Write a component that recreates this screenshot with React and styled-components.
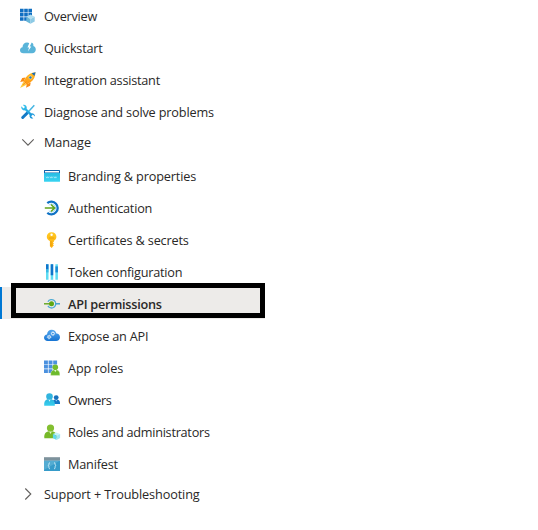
import React from "react";
import styled, { createGlobalStyle } from "styled-components";

const GlobalStyle = createGlobalStyle`
  body {
    margin: 0;
    background: #fff;
    overflow: hidden;
  }
`;

const Nav = styled.nav`
  width: 265px;
  font-family: "Open Sans", "Noto Sans", sans-serif;
  font-size: 12.7px;
  color: #292827;
`;

const List = styled.ul`
  list-style: none;
  margin: 0;
  padding: 0;
`;

const Item = styled.li`
  position: relative;
  display: flex;
  align-items: center;
  gap: 8px;
  height: 32px;
  padding-left: ${(p) => (p.$nested ? 44 : 20)}px;
`;

const ActiveItem = styled(Item)`
  box-sizing: border-box;
  margin-top: -1px;
  margin-bottom: 1px;
  padding-left: 42px;
  padding-top: 2px;
  border-left: 2px solid #0078d4;
  background: #edebe9;
  font-weight: 600;
`;

const Frame = styled.span`
  position: absolute;
  box-sizing: border-box;
  left: 9px;
  top: -4px;
  width: 254px;
  height: 35px;
  border: 5px solid #000;
`;

const GroupHeader = styled.div`
  display: flex;
  align-items: center;
  gap: 8px;
  height: 28px;
  padding-left: 20px;
  margin-bottom: 4px;
`;

const Icon = styled.svg`
  flex: none;
  width: 16px;
  height: 16px;
  overflow: visible;
`;

const Label = styled.span`
  line-height: 18px;
  white-space: nowrap;
  letter-spacing: ${(p) => p.$track || 0}px;
`;

const Gradient = ({ id, from, to }) => (
  <linearGradient id={id} x1="0" y1="0" x2="0" y2="1">
    <stop offset="0" stopColor={from} />
    <stop offset="1" stopColor={to} />
  </linearGradient>
);

const OverviewIcon = () => (
  <Icon viewBox="0 0 16 16">
    <path fill="#0f6fc2" d="M0 .8h3.600v3.600H0zM4.200.8h3.600v3.600H4.200zM8.400.8H12v3.600H8.400zM0 5h3.600v3.600H0zM4.200 5h3.600v3.600H4.200zM8.400 5H12v3.600H8.400zM0 9.200h3.600v3.600H0zM4.200 9.200h3.600v3.600H4.200z" />
    <path fill="#b3def0" d="m10.500 6.500 4.200 2.200-4.200 2.300-4.200-2.300z" />
    <path fill="#69b6d8" d="m6.300 8.700 4.200 2.300v4.800l-4.200-2.300z" />
    <path fill="#8dcae5" d="m14.700 8.700-4.200 2.300v4.800l4.200-2.300z" />
  </Icon>
);

const QuickstartIcon = () => (
  <Icon viewBox="0 0 16 16">
    <path fill="#59b4d9" d="M3.400 13.200C1.300 13.200 0 11.900 0 10.200c0-1.700 1.200-2.700 2.500-2.900C2.600 4.500 4.500 2.500 7 2.500c1 0 1.900.3 2.600.9.700-.7 1.600-.9 2.400-.6 1.100.4 1.600 1.600 1.400 3.200 1.400.5 2.400 1.800 2.400 3.500 0 2.300-1.600 3.700-3.600 3.700z" />
    <path fill="#fff" d="M9.500 2.500 7.500 7.500h1.600l-1.200 4L11.300 6.600H9.700l2-4.100z" />
  </Icon>
);

const RocketIcon = () => (
  <Icon viewBox="0 0 16 16">
    <defs>
      <Gradient id="rocket" from="#ffbd22" to="#ff9616" />
    </defs>
    <path fill="#f98b16" d="M5.400 5.400 2.200 6 .2 10.100l3.600-.8zM10.700 10.500 10.100 13.700 6 15.800l.8-3.600z" />
    <path fill="url(#rocket)" d="M15.500.3C11.300.5 8.300 2.200 6 5.200L3.300 9.500l3.300 3.300 4.200-2.700c3-2.300 4.600-5.300 4.700-9.800z" />
    <path fill="#ffca3a" d="M3.400 9.700.1 15.900l6.300-3.200z" />
    <path fill="#156bbb" d="M15.600.2 11.700 1.300l2.700 2.700z" />
    <circle cx="10.400" cy="5.500" r="1.600" fill="#1b7ac9" stroke="#ffe28a" strokeWidth=".7" />
    <path d="m3 12.900 3.300-3.300" stroke="#f28213" strokeWidth=".8" />
  </Icon>
);

const ToolsIcon = () => (
  <Icon viewBox="0 0 16 16">
    <defs>
      <linearGradient id="wrench" x1="2" y1="2" x2="14" y2="15" gradientUnits="userSpaceOnUse">
        <stop offset="0" stopColor="#36c4ed" />
        <stop offset="1" stopColor="#168bd5" />
      </linearGradient>
    </defs>
    <path d="m14.300 1.200-7.300 8" stroke="#45b5e2" strokeWidth="1.500" />
    <path d="m7 9.200-4.300 4.300" stroke="#147ac7" strokeWidth="3" strokeLinecap="round" />
    <path fill="url(#wrench)" d="M1.300 2.300 3.500 4.500l1.500-1.400L2.900.9C5 .3 7.300 2 6.700 4.700l4.500 4.600c1.900-.5 4 .9 3.700 3.300l-2-2-1.800 1.700 2.200 2.200c-2.200.6-4.300-1.100-3.700-3.600L5 6.300C2.700 7 .7 4.700 1.300 2.300z" />
  </Icon>
);

const ChevronDown = () => (
  <Icon viewBox="0 0 16 16">
    <path d="m2.300 5.400 5.700 5.700 5.700-5.700" fill="none" stroke="#605e5c" strokeWidth="1.100" />
  </Icon>
);

const ChevronRight = () => (
  <Icon viewBox="0 0 16 16">
    <path d="m5.300 2.500 5.500 5.500-5.500 5.500" fill="none" stroke="#605e5c" strokeWidth="1.100" />
  </Icon>
);

const BrandingIcon = () => (
  <Icon viewBox="0 0 16 16">
    <defs>
      <Gradient id="browser" from="#29bce3" to="#39d4f1" />
    </defs>
    <path fill="url(#browser)" d="M0 5h16v8.200a.6.600 0 0 1-.6.600H.6a.6.600 0 0 1-.6-.6z" />
    <path fill="#0d61a9" d="M.6 2h14.800a.6.600 0 0 1 .6.600V5H0V2.600A.6.600 0 0 1 .6 2z" />
    <path fill="#fff" d="M1 3h14v1.500H1z" />
    <path d="m2 8.700.7 1.400.7-1.400.7 1.400.7-1.400m1.100 0 .7 1.400.7-1.400.7 1.400.7-1.400m1.100 0 .7 1.400.7-1.400.7 1.400.7-1.400" fill="none" stroke="#c4f2fb" strokeWidth=".6" />
  </Icon>
);

const AuthenticationIcon = () => (
  <Icon viewBox="0 0 16 16">
    <path d="M3.300 3.200A6.300 6.300 0 1 1 3.300 12.800" fill="none" stroke="#0f72c5" strokeWidth="2.300" />
    <path d="M4.800 5.100a4 4 0 1 1 0 5.800" fill="none" stroke="#75c8ed" strokeWidth=".7" />
    <path d="M.8 8h9.500M7 4.500 10.600 8 7 11.500" fill="none" stroke="#62a51c" strokeWidth="1.600" />
  </Icon>
);

const KeyIcon = () => (
  <Icon viewBox="0 0 16 16">
    <defs>
      <Gradient id="key" from="#ffca24" to="#ffad0c" />
    </defs>
    <path fill="url(#key)" fillRule="evenodd" d="M7.600.2c2.900 0 4.800 1.800 4.800 4.500 0 1.900-1 3.300-2.500 4v1.100l-1 .8 1 .9-1 .9 1 .9-.9 1L7.700 16l-1.800-1.800V8.900C4.100 8.100 2.800 6.700 2.800 4.700 2.800 2 4.700.2 7.600.2zm0 1.400a1.200 1.200 0 1 0 0 2.400 1.200 1.200 0 0 0 0-2.400z" />
    <path d="M7 9v5.200M5 6h5.200" stroke="#df9509" strokeWidth=".7" />
  </Icon>
);

const TokenIcon = () => (
  <Icon viewBox="0 0 16 16">
    <path fill="#5ddcf2" d="M2 .2h2.500v15.500H2zM6.700.2h2.500v15.500H6.700zM11.400.2h2.500v15.500h-2.500z" />
    <path fill="#0f74cb" d="M2 .2h2.500v5.200H2zM6.700.2h2.500v11H6.700z" />
    <path fill="#198bd6" d="M11.400 2.400h2.500v6h-2.500z" />
    <path fill="#38b8e4" d="M2 5.400h2.500v3H2z" />
  </Icon>
);

const PermissionsIcon = () => (
  <Icon viewBox="0 0 16 16">
    <path d="M3.900 5.700a4.200 4.200 0 1 1 0 4.200" fill="none" stroke="#51abd3" strokeWidth="1.300" />
    <path d="M11.600 7.800H16" stroke="#3c9ccc" strokeWidth="1.400" />
    <path d="M0 7.800h6" stroke="#61a51d" strokeWidth="1.400" />
    <circle cx="7.500" cy="7.800" r="2.500" fill="#5fa714" />
  </Icon>
);

const ExposeIcon = () => (
  <Icon viewBox="0 0 16 16">
    <defs>
      <Gradient id="cloud" from="#55a7ed" to="#1674d3" />
    </defs>
    <path fill="url(#cloud)" d="M3.700 13C1.500 13 0 11.600 0 9.700c0-1.700 1.300-3 3-3.200C3.200 3.700 5.100 1.700 7.700 1.700c2.400 0 4.200 1.500 4.700 3.800 2.100.1 3.600 1.600 3.600 3.700 0 2.200-1.700 3.800-3.900 3.800z" />
    <circle cx="8.900" cy="5.600" r="1.400" fill="none" stroke="#fff" strokeWidth=".9" />
    <circle cx="8.900" cy="5.600" r="2.100" fill="none" stroke="#e7f5ff" strokeWidth=".5" strokeDasharray=".8 .93" />
    <circle cx="5.100" cy="9" r="1.300" fill="none" stroke="#fff" strokeWidth=".9" />
    <circle cx="5.100" cy="9" r="2" fill="none" stroke="#e7f5ff" strokeWidth=".5" strokeDasharray=".8 .85" />
  </Icon>
);

const AppRolesIcon = () => (
  <Icon viewBox="0 0 16 16">
    <path fill="#4b91df" d="M0 .4h3.900v3.800H0zM4.600.4h3.900v3.800H4.600zM9.200.4h3.900v3.800H9.200zM0 4.800h3.900v3.800H0zM4.600 4.800h3.900v3.800H4.600zM9.200 4.800h3.900v3.800H9.200zM0 9.200h3.900V13H0zM4.600 9.200h3.900V13H4.600z" />
    <path fill="#6dba2c" stroke="#fff" strokeWidth=".3" d="M6.700 15.400v-1.600c0-2.400 1.700-4 4.600-4s4.500 1.600 4.500 4v1.600z" />
    <path fill="#e9f8d6" d="m10.200 10 1.100 2.200 1-2.200z" />
    <circle cx="11.300" cy="7.200" r="2.800" fill="#76bd2d" />
  </Icon>
);

const OwnersIcon = () => (
  <Icon viewBox="0 0 16 16">
    <defs>
      <Gradient id="ownerFront" from="#2fb5dc" to="#35ceef" />
    </defs>
    <path fill="#1677c6" d="M8.400 12v-1.300c0-2.100 1.200-3.300 3.700-3.300 2.600 0 3.900 1.200 3.900 3.300V12z" />
    <path fill="#dff4ff" d="m11.400 7.500.8 1.900.8-1.900z" />
    <circle cx="12.200" cy="5.600" r="2.400" fill="#1770bc" />
    <path fill="url(#ownerFront)" d="M.2 13.700v-1.900C.2 8.700 2.200 7 5.500 7s5.300 1.700 5.300 4.800v1.900z" />
    <path fill="#d9f7fc" d="m4.200 7.100 1.300 2.600 1.300-2.600z" />
    <circle cx="5.500" cy="4.500" r="3.300" fill="#31b4de" />
  </Icon>
);

const RolesIcon = () => (
  <Icon viewBox="0 0 16 16">
    <path fill="#77b929" d="M.3 14.300v-2C.3 9 2.500 7.200 6.500 7.200s6.300 1.800 6.300 5.100v2z" />
    <path fill="#e1f4c6" d="m5 7.300 1.500 2.700 1.500-2.700z" />
    <circle cx="6.500" cy="4" r="3.600" fill="#83bf30" />
    <path fill="#c4f3fb" d="m12.500 8.400 3.600 1.600-3.600 1.800L8.900 10z" />
    <path fill="#62d9ed" d="m8.900 10 3.600 1.800V16l-3.600-1.900z" />
    <path fill="#a1e5f2" d="m16.100 10-3.600 1.800V16l3.600-1.900z" />
  </Icon>
);

const ManifestIcon = () => (
  <Icon viewBox="0 0 16 16">
    <path fill="#369bc9" d="M0 4.500h16V15H0z" />
    <path fill="#54acd2" d="M0 4.500h16L0 14z" />
    <path fill="#7d929c" d="M0 1.200h16v3.300H0z" />
    <path d="M5.900 6.600c-1.500 0-.5 2.400-1.600 3.100 1.100.7.100 3.200 1.600 3.200m4.200-6.300c1.500 0 .5 2.400 1.600 3.100-1.100.7-.1 3.200-1.600 3.200" fill="none" stroke="#d8f2fb" strokeWidth=".9" />
  </Icon>
);

const topItems = [
  { label: "Overview", icon: OverviewIcon, track: -0.25 },
  { label: "Quickstart", icon: QuickstartIcon, track: -0.25 },
  { label: "Integration assistant", icon: RocketIcon, track: -0.23 },
  { label: "Diagnose and solve problems", icon: ToolsIcon, track: -0.16 },
];

const manageItems = [
  { label: "Branding & properties", icon: BrandingIcon, track: -0.15 },
  { label: "Authentication", icon: AuthenticationIcon, track: -0.2 },
  { label: "Certificates & secrets", icon: KeyIcon, track: -0.16 },
  { label: "Token configuration", icon: TokenIcon, track: -0.22 },
  { label: "API permissions", icon: PermissionsIcon, track: -0.26, active: true },
  { label: "Expose an API", icon: ExposeIcon, track: -0.2 },
  { label: "App roles", icon: AppRolesIcon, track: -0.1 },
  { label: "Owners", icon: OwnersIcon, track: -0.4 },
  { label: "Roles and administrators", icon: RolesIcon, track: -0.26 },
  { label: "Manifest", icon: ManifestIcon, track: -0.2 },
];

function MenuItem({ label, icon: Glyph, track, active, nested }) {
  const Row = active ? ActiveItem : Item;
  return (
    <Row $nested={nested} aria-current={active ? "page" : undefined}>
      <Glyph />
      <Label $track={track}>{label}</Label>
      {active && <Frame />}
    </Row>
  );
}

export default function App() {
  return (
    <>
      <GlobalStyle />
      <Nav>
        <List>
          {topItems.map((item) => (
            <MenuItem key={item.label} {...item} />
          ))}
        </List>
        <GroupHeader>
          <ChevronDown />
          <Label $track={-0.05}>Manage</Label>
        </GroupHeader>
        <List>
          {manageItems.map((item) => (
            <MenuItem key={item.label} {...item} nested />
          ))}
        </List>
        <GroupHeader>
          <ChevronRight />
          <Label $track={-0.12}>Support + Troubleshooting</Label>
        </GroupHeader>
      </Nav>
    </>
  );
}
